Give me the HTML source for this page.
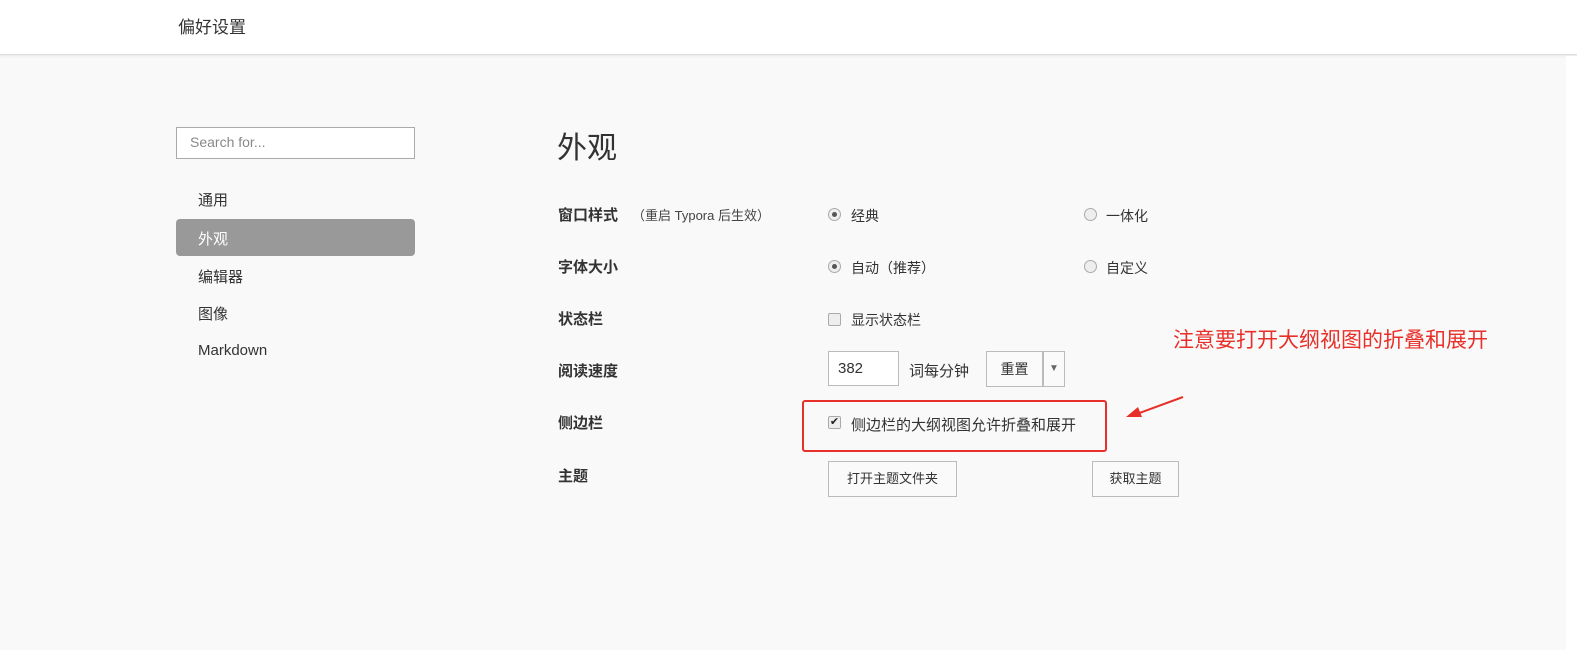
<!DOCTYPE html>
<html><head><meta charset="utf-8"><style>
*{box-sizing:border-box;margin:0;padding:0}
body{width:1577px;height:650px;background:#f9f9f9;position:relative;overflow:hidden;font-family:"Liberation Sans","Noto Sans CJK SC",sans-serif;color:#333}
.a{position:absolute;white-space:nowrap}
.hdr{left:0;top:0;width:1577px;height:55px;background:#fff;border-bottom:1px solid #ddd;box-shadow:0 1px 3px rgba(0,0,0,.08)}
.lbl{font-size:15px;font-weight:bold;color:#333}
.t{font-size:14px;color:#333}
.radio{width:13px;height:13px;border:1px solid #aaa;border-radius:50%;background:#eee}
.radio.on:after{content:"";position:absolute;left:3px;top:3px;width:5px;height:5px;border-radius:50%;background:#555}
.chk{width:13px;height:13px;border:1px solid #aaa;border-radius:2px;background:#eee}
.btn{border:1px solid #bbb;background:#fafafa;font-size:13px;text-align:center;color:#333}
</style></head><body>
<div class="a hdr"></div>
<div class="a" style="left:178px;top:13px;font-size:17px;color:#333">偏好设置</div>
<div class="a" style="left:1566px;top:56px;width:11px;height:594px;background:#fff"></div>

<div class="a" style="left:176px;top:127px;width:239px;height:32px;border:1px solid #aaa;background:#fff"></div>
<div class="a" style="left:190px;top:134px;font-size:14px;color:#888">Search for...</div>
<div class="a t" style="left:198px;top:189px;font-size:15px">通用</div>
<div class="a" style="left:176px;top:219px;width:239px;height:37px;background:#999;border-radius:4px"></div>
<div class="a" style="left:198px;top:228px;font-size:15px;color:#fff">外观</div>
<div class="a t" style="left:198px;top:266px;font-size:15px">编辑器</div>
<div class="a t" style="left:198px;top:303px;font-size:15px">图像</div>
<div class="a t" style="left:198px;top:342px;font-size:15px">Markdown</div>

<div class="a" style="left:557px;top:123px;font-size:30px;color:#333">外观</div>

<div class="a lbl" style="left:558px;top:204px">窗口样式</div>
<div class="a" style="left:632px;top:205px;font-size:13px;color:#444">（重启 Typora 后生效）</div>
<div class="a radio on" style="left:828px;top:208px"></div>
<div class="a t" style="left:851px;top:206px">经典</div>
<div class="a radio" style="left:1084px;top:208px"></div>
<div class="a t" style="left:1106px;top:206px">一体化</div>

<div class="a lbl" style="left:558px;top:256px">字体大小</div>
<div class="a radio on" style="left:828px;top:260px"></div>
<div class="a t" style="left:851px;top:258px">自动（推荐）</div>
<div class="a radio" style="left:1084px;top:260px"></div>
<div class="a t" style="left:1106px;top:258px">自定义</div>

<div class="a lbl" style="left:558px;top:308px">状态栏</div>
<div class="a chk" style="left:828px;top:313px"></div>
<div class="a t" style="left:851px;top:310px">显示状态栏</div>

<div class="a lbl" style="left:558px;top:360px">阅读速度</div>
<div class="a" style="left:828px;top:351px;width:71px;height:35px;border:1px solid #bbb;background:#fff"></div>
<div class="a" style="left:838px;top:360px;font-size:15px;color:#333">382</div>
<div class="a t" style="left:909px;top:360px;font-size:15px">词每分钟</div>
<div class="a btn" style="left:986px;top:351px;width:57px;height:36px;line-height:34px;font-size:14px">重置</div>
<div class="a btn" style="left:1043px;top:351px;width:22px;height:36px;line-height:34px;font-size:10px;color:#666">▼</div>

<div class="a lbl" style="left:558px;top:412px">侧边栏</div>
<div class="a" style="left:802px;top:400px;width:305px;height:52px;border:2px solid #e8302a;border-radius:3px"></div>
<div class="a chk" style="left:828px;top:416px;font-size:11px;line-height:11px;text-align:center;color:#222">✔</div>
<div class="a t" style="left:851px;top:414px;font-size:15px">侧边栏的大纲视图允许折叠和展开</div>

<div class="a lbl" style="left:558px;top:465px">主题</div>
<div class="a btn" style="left:828px;top:461px;width:129px;height:36px;line-height:34px">打开主题文件夹</div>
<div class="a btn" style="left:1092px;top:461px;width:87px;height:36px;line-height:34px">获取主题</div>

<div class="a" style="left:1173px;top:324px;font-size:21px;color:#e8302a">注意要打开大纲视图的折叠和展开</div>
<svg class="a" style="left:1120px;top:390px" width="70" height="30"><line x1="63" y1="7" x2="14" y2="25" stroke="#e8302a" stroke-width="2"/><polygon points="6,27 18,17 22,27" fill="#e8302a"/></svg>
</body></html>
